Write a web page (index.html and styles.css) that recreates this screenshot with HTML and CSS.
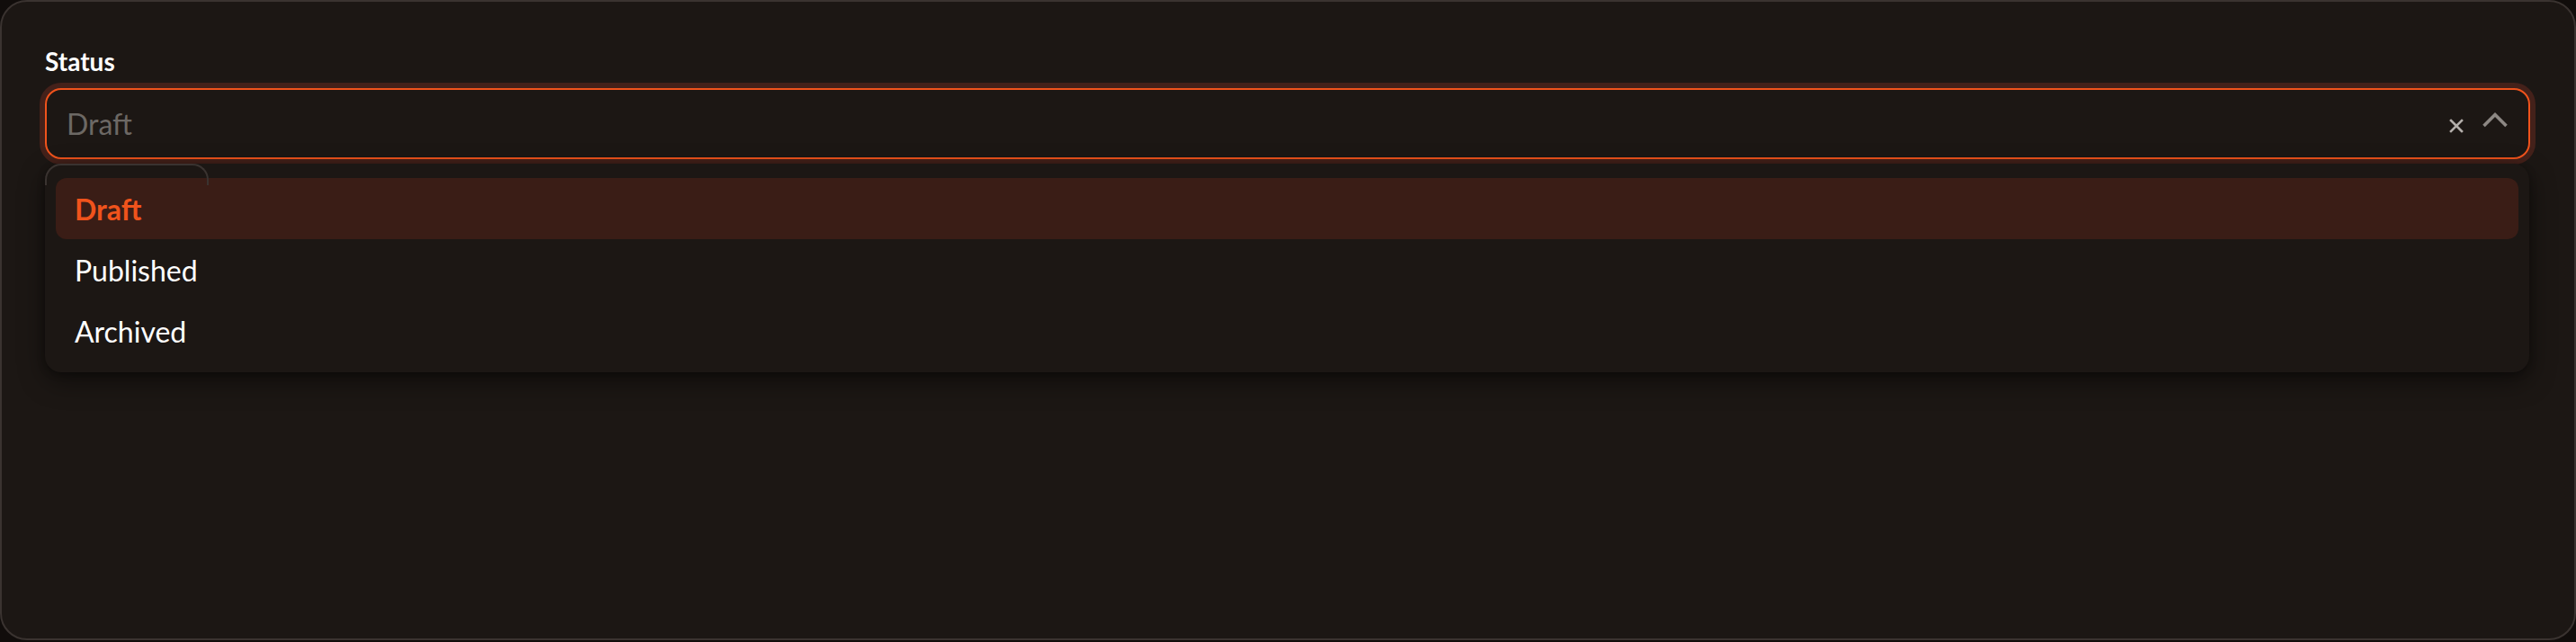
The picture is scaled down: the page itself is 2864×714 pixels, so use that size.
FILE: index.html
```html
<!DOCTYPE html>
<html lang="en">
<head>
<meta charset="utf-8">
<title>Status select</title>
<link rel="stylesheet" href="styles.css">
</head>
<body>
<div class="card">
  <label class="label">Status</label>
  <div class="field">
    <div class="select">
      <span class="placeholder">Draft</span>
      <span class="icons">
        <svg class="clear" width="16" height="16" viewBox="0 0 16 16"><path d="M2 2 L14 14 M14 2 L2 14" stroke="#b3aeaa" stroke-width="2.6" stroke-linecap="square"/></svg>
        <svg class="chev" width="30" height="20" viewBox="0 0 30 20"><path d="M2.5 17 L15 4.5 L27.5 17" fill="none" stroke="#8d8884" stroke-width="3.6" stroke-linejoin="miter"/></svg>
      </span>
    </div>
    <div class="menu">
      <div class="ghost"></div>
      <div class="option active">Draft</div>
      <div class="option">Published</div>
      <div class="option">Archived</div>
    </div>
  </div>
</div>
</body>
</html>
```
FILE: styles.css
```css
html, body {
  margin: 0;
  padding: 0;
  background: #110d0b;
}
body {
  width: 2864px;
  height: 714px;
  font-family: "Lato", "Noto Sans", sans-serif;
}
.card {
  box-sizing: border-box;
  width: 2864px;
  height: 712px;
  background: #1c1714;
  border: 2px solid #3a3330;
  border-radius: 30px;
  padding: 46px 49px 0 48px;
}
.label {
  display: block;
  color: #ffffff;
  font-size: 28px;
  font-weight: 700;
  line-height: 40px;
  margin-bottom: 10px;
}
.field {
  position: relative;
}
.select {
  box-sizing: border-box;
  height: 79px;
  border: 2px solid #f0531c;
  border-radius: 18px;
  box-shadow: 0 0 0 6px #44211a;
  display: flex;
  align-items: center;
  padding: 0 22px 0 22px;
  background: #1c1714;
}
.placeholder {
  flex: 1;
  color: #6c6864;
  font-size: 32px;
  line-height: 40px;
}
.icons {
  display: flex;
  align-items: center;
  gap: 20px;
}
.clear {
  margin-top: 4px;
}
.chev {
  margin-top: -10px;
}
.menu {
  position: absolute;
  left: 0;
  right: 1px;
  top: 84px;
  box-sizing: border-box;
  background: #1c1714;
  border-radius: 18px;
  padding: 16px 12px 12px;
  box-shadow: 0 10px 30px rgba(0, 0, 0, 0.45), 0 2px 8px rgba(0, 0, 0, 0.3);
}
.ghost {
  position: absolute;
  left: 0;
  top: 0;
  width: 182px;
  height: 24px;
  box-sizing: border-box;
  border: 2px solid #3a3330;
  border-bottom: none;
  border-radius: 18px 18px 0 0;
}
.option {
  height: 68px;
  display: flex;
  align-items: center;
  padding-left: 21px;
  color: #ffffff;
  font-size: 32px;
  border-radius: 12px;
}
.option.active {
  background: #3a1d16;
  color: #f0531c;
  font-weight: 700;
}
```
